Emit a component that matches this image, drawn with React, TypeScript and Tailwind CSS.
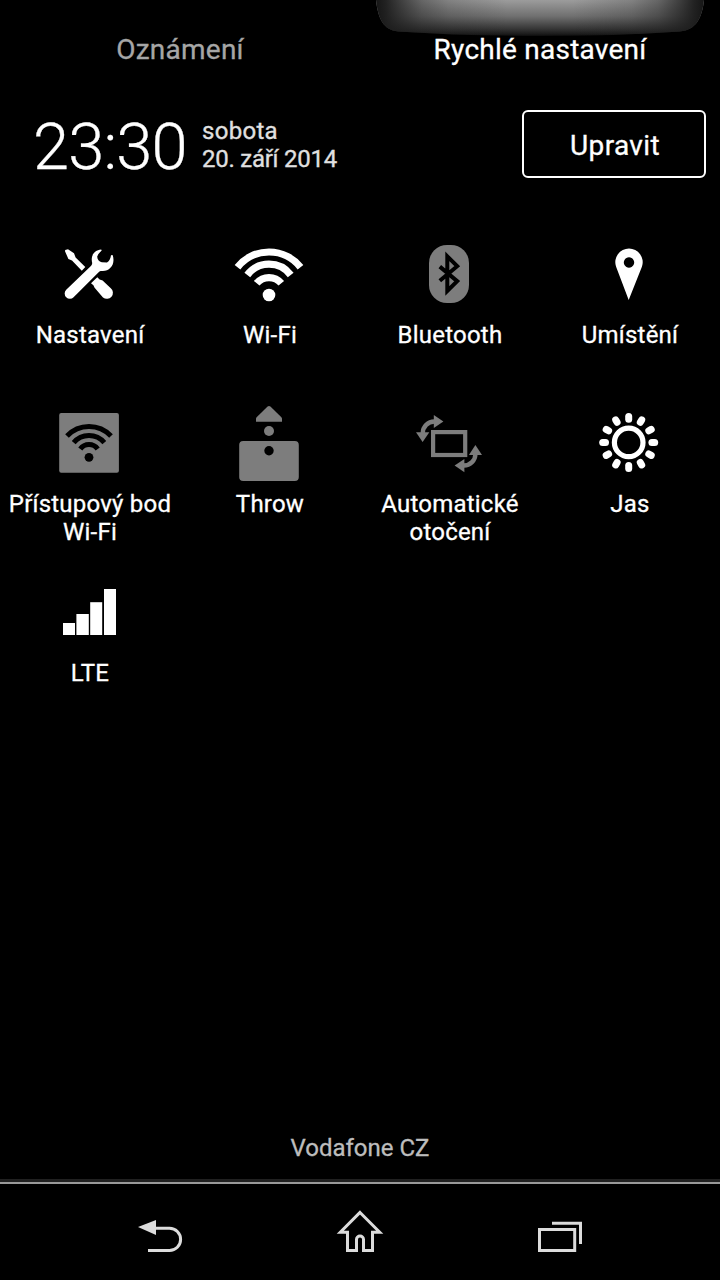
import type { ReactNode } from "react";

const GREY = "#7d7d7d";

function TileIcon({ children }: { children: ReactNode }) {
  return (
    <svg width="80" height="80" viewBox="0 0 80 80" fill="none" className="block shrink-0">
      {children}
    </svg>
  );
}

function SettingsIcon() {
  return (
    <TileIcon>
      <path d="M15 17.2 L15.2 16 L18 15.3 L24 19.3 L25.6 23.4 L35.3 33 L31.8 36.7 L22 26.6 L18.4 25 Z" fill="#fff" />
      <path d="M47.3 43.3 L49.6 45.4 L52.6 46.4 L60.8 54.2 A6 6 0 0 1 53 63.4 L44.6 53.8 L43.4 51.2 L41 49.3 Z" fill="#fff" />
      <path
        d="M51.2 15.6 C44 16.2 40.4 22 42.2 29 C42.2 30.6 41.4 31.4 40.4 32.4 L16.2 55.8 A5.2 5.2 0 0 0 23.6 63.2 L48.4 38.4 C49.6 37.2 50.6 36.8 52 36.9 C60 37.4 65.8 30 62.6 21 L61 21.2 C60.6 24.2 59.4 27 57 28.4 L51.8 28.2 C49 27.6 47.2 25 47.2 22.4 C48.2 20 50 18.2 51.7 16.6 Z"
        fill="#fff"
      />
    </TileIcon>
  );
}

function WifiIcon() {
  return (
    <TileIcon>
      <circle cx="39" cy="61" r="6.3" fill="#fff" />
      <g stroke="#fff" strokeWidth="7.2">
        <path d="M7.5 33.2 A40.2 40.2 0 0 1 70.5 33.2" />
        <path d="M17.3 41 A27.2 27.2 0 0 1 60.7 41" />
        <path d="M26.7 49.3 A16 16 0 0 1 51.3 49.3" />
      </g>
    </TileIcon>
  );
}

function BluetoothIcon() {
  return (
    <TileIcon>
      <rect x="19" y="11" width="40" height="58" rx="18" fill={GREY} />
      <path d="M29.8 32.6 L47.2 47.2 L37.3 57 V22.4 L47.2 32.2 L29.8 46.8" stroke="#000" strokeWidth="4" strokeMiterlimit="8" />
    </TileIcon>
  );
}

function LocationIcon() {
  return (
    <TileIcon>
      <path
        d="M38.7 66 L26 32.5 A13.7 13.7 0 1 1 52 32.5 Z M39 23.3 a5.2 5.2 0 1 0 0.01 0 Z"
        fill="#fff"
        fillRule="evenodd"
      />
    </TileIcon>
  );
}

function HotspotIcon() {
  return (
    <TileIcon>
      <rect x="9.2" y="10" width="59.7" height="59.7" rx="2" fill={GREY} />
      <circle cx="39" cy="54.3" r="4.4" fill="#000" />
      <g stroke="#000" strokeWidth="5">
        <path d="M17 33 A30.2 30.2 0 0 1 61 33" />
        <path d="M23.7 39.7 A19.9 19.9 0 0 1 54.3 39.7" />
        <path d="M30.3 46 A10.7 10.7 0 0 1 47.7 46" />
      </g>
    </TileIcon>
  );
}

function ThrowIcon() {
  return (
    <TileIcon>
      <path d="M37.6 3.6 Q39 2.4 40.4 3.6 L51.4 14.2 Q52 14.8 52 15.6 V18.7 H26 V15.6 Q26 14.8 26.6 14.2 Z" fill={GREY} />
      <circle cx="39" cy="28" r="5" fill={GREY} />
      <rect x="9.2" y="38" width="59.6" height="40" rx="4" fill={GREY} />
      <circle cx="39" cy="47.7" r="4.7" fill="#000" />
    </TileIcon>
  );
}

function RotateIcon() {
  return (
    <TileIcon>
      <rect x="23.1" y="29.1" width="32.1" height="22.9" stroke={GREY} strokeWidth="4.2" />
      <g stroke={GREY} strokeWidth="4.4">
        <path d="M12.8 30 A11.5 11.5 0 0 1 24.3 18.5" />
        <path d="M65.4 51 A11.5 11.5 0 0 1 53.9 62.5" />
      </g>
      <g fill={GREY}>
        <path d="M33.4 18.4 L23.8 12 V25 Z" />
        <path d="M12.6 39 L6 29.3 H19.3 Z" />
        <path d="M65.4 42 L58.9 52 H72 Z" />
        <path d="M44.6 62.5 L54.4 56 V69.3 Z" />
      </g>
    </TileIcon>
  );
}

const RAYS = [0, 30, 60, 90, 120, 150, 180, 210, 240, 270, 300, 330];

function BrightnessIcon() {
  return (
    <TileIcon>
      <circle cx="38.7" cy="39.4" r="14.3" stroke="#fff" strokeWidth="5.2" />
      {RAYS.map((a) => (
        <path
          key={a}
          d="M38.7 16.2 V13.4"
          stroke="#fff"
          strokeWidth="7"
          strokeLinecap="round"
          transform={`rotate(${a} 38.7 39.4)`}
        />
      ))}
    </TileIcon>
  );
}

function SignalIcon() {
  return (
    <TileIcon>
      <g fill="#fff">
        <rect x="13" y="51" width="12" height="12" />
        <rect x="26.4" y="42" width="12.4" height="21" />
        <rect x="40.2" y="30.2" width="12" height="32.8" />
        <rect x="54" y="17" width="12" height="46" />
      </g>
    </TileIcon>
  );
}

const TILES: { label: ReactNode; icon: ReactNode }[] = [
  { label: "Nastavení", icon: <SettingsIcon /> },
  { label: "Wi-Fi", icon: <WifiIcon /> },
  { label: "Bluetooth", icon: <BluetoothIcon /> },
  { label: "Umístění", icon: <LocationIcon /> },
  { label: <>Přístupový bod<br />Wi-Fi</>, icon: <HotspotIcon /> },
  { label: "Throw", icon: <ThrowIcon /> },
  { label: <>Automatické<br />otočení</>, icon: <RotateIcon /> },
  { label: "Jas", icon: <BrightnessIcon /> },
  { label: "LTE", icon: <SignalIcon /> },
];

const GLOW = "M2 0 C4 18 9 30 24 31.5 Q90 36 166 36 Q242 36 306 31.5 C322 30 328 18 330 0 Z";

function TabGlow() {
  return (
    <svg width="332" height="38" viewBox="0 0 332 38" className="absolute top-0 left-[374px]">
      <defs>
        <linearGradient id="fall" x1="0" y1="0" x2="0" y2="1">
          <stop offset="0" stopColor="#9c9c9c" />
          <stop offset="0.45" stopColor="#707070" />
          <stop offset="0.8" stopColor="#363636" />
          <stop offset="0.95" stopColor="#1a1a1a" />
          <stop offset="1" stopColor="#0c0c0c" />
        </linearGradient>
        <linearGradient id="sides" x1="0" y1="0" x2="1" y2="0">
          <stop offset="0" stopColor="#161616" />
          <stop offset="0.03" stopColor="#1c1c1c" stopOpacity="0.95" />
          <stop offset="0.07" stopColor="#1c1c1c" stopOpacity="0.75" />
          <stop offset="0.14" stopColor="#1c1c1c" stopOpacity="0.42" />
          <stop offset="0.22" stopColor="#1c1c1c" stopOpacity="0.2" />
          <stop offset="0.4" stopColor="#1c1c1c" stopOpacity="0" />
          <stop offset="0.6" stopColor="#1c1c1c" stopOpacity="0" />
          <stop offset="0.78" stopColor="#1c1c1c" stopOpacity="0.2" />
          <stop offset="0.86" stopColor="#1c1c1c" stopOpacity="0.42" />
          <stop offset="0.93" stopColor="#1c1c1c" stopOpacity="0.75" />
          <stop offset="0.97" stopColor="#1c1c1c" stopOpacity="0.95" />
          <stop offset="1" stopColor="#161616" />
        </linearGradient>
      </defs>
      <path d={GLOW} fill="url(#fall)" />
      <path d={GLOW} fill="url(#sides)" />
    </svg>
  );
}

export default function App() {
  return (
    <div className="relative flex h-[1280px] w-[720px] flex-col overflow-hidden bg-black font-['Roboto',sans-serif] text-white [-webkit-text-stroke:0.3px]">
      <TabGlow />
      <div className="relative grid h-[100px] grid-cols-2 pt-[33px] text-center text-[28px] leading-[33px] tracking-[0.24px]">
        <div className="text-[#a6a6a6]">Oznámení</div>
        <div>Rychlé nastavení</div>
      </div>

      <div className="flex h-[134px] items-start pt-[10px] pr-[14px] pl-[33px]">
        <div className="w-[169px] pt-px text-[65px] leading-[73px] font-light tracking-[-0.8px] whitespace-nowrap">23:30</div>
        <div className="flex-1 pt-[7px] text-[24px] leading-[28px] text-[#e0e0e0]">
          <div className="tracking-[0.3px]">sobota</div>
          <div className="tracking-[-0.25px]">20. září 2014</div>
        </div>
        <button className="h-[68px] w-[184px] rounded-[6px] border-2 border-white pt-[2px] pl-[2px] text-[28px] leading-[33px] tracking-[0.35px]">
          Upravit
        </button>
      </div>

      <div className="grid grid-cols-4">
        {TILES.map((tile, i) => (
          <div key={i} className="flex h-[169px] flex-col items-center text-center text-[24px] leading-[28px] tracking-[0.22px]">
            {tile.icon}
            <div className="mt-[7px] whitespace-nowrap">{tile.label}</div>
          </div>
        ))}
      </div>

      <div className="mt-auto pb-[17px] text-center text-[24px] leading-[28px] text-[#bdbdbd]">Vodafone CZ</div>
      <div className="h-[3px] shrink-0 bg-[#202020]" />
      <div className="flex h-[98px] shrink-0 items-start border-t-2 border-[#999999] px-[60px] pt-[17px]">
        <div className="flex w-[200px] justify-center">
          <svg width="60" height="60" viewBox="0 0 60 60" fill="none">
            <path d="M8 26 L26 19 V34 Z" fill="#dcdcdc" />
            <path d="M25 27.3 H39.5 A11.1 11.1 0 0 1 39.5 49.5 H18" stroke="#dcdcdc" strokeWidth="3" />
          </svg>
        </div>
        <div className="flex w-[200px] justify-center">
          <svg width="60" height="60" viewBox="0 0 60 60" fill="none">
            <path
              d="M30 11.5 L49.7 31.3 H42.5 V49.5 H33.5 V38.5 a3.5 3.5 0 0 0 -7 0 V49.5 H17.5 V31.3 H10.3 Z"
              stroke="#dcdcdc"
              strokeWidth="3"
            />
          </svg>
        </div>
        <div className="flex w-[200px] justify-center">
          <svg width="60" height="60" viewBox="0 0 60 60" fill="none">
            <rect x="9.5" y="28.5" width="35.2" height="21" stroke="#dcdcdc" strokeWidth="3" />
            <path d="M22 22.2 H50.5 V43" stroke="#dcdcdc" strokeWidth="3" />
          </svg>
        </div>
      </div>
    </div>
  );
}
